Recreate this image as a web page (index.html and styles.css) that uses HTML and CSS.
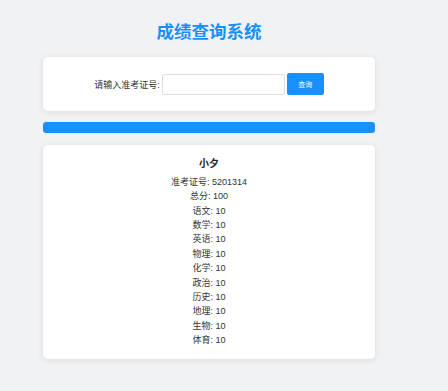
FILE: index.html
```html
<!DOCTYPE html>
<html lang="zh-CN">
<head>
    <meta charset="UTF-8">
    <meta name="viewport" content="width=device-width, initial-scale=1.0">
    <title>成绩查询系统</title>
    <link rel="stylesheet" href="styles.css">
</head>
<body>

<div class="container">
    <h1 class="title">成绩查询系统</h1>

    <div class="card search-card">
        <div class="search-row">
            <label for="ticket">请输入准考证号:</label>
            <input type="text" id="ticket">
            <button class="search-btn">查询</button>
        </div>
    </div>

    <div class="progress-bar"></div>

    <div class="card result-card">
        <h3 class="student-name">小夕</h3>
        <p>准考证号: 5201314</p>
        <p>总分: 100</p>
        <p>语文: 10</p>
        <p>数学: 10</p>
        <p>英语: 10</p>
        <p>物理: 10</p>
        <p>化学: 10</p>
        <p>政治: 10</p>
        <p>历史: 10</p>
        <p>地理: 10</p>
        <p>生物: 10</p>
        <p>体育: 10</p>
    </div>
</div>

</body>
</html>
```

FILE: styles.css
```css
/* Basic reset */
* {
    margin: 0;
    padding: 0;
    box-sizing: border-box;
}

body {
    font-family: "Liberation Sans", "Noto Sans CJK SC", sans-serif;
    background-color: #f0f2f5;
    color: #333;
    min-height: 100vh;
}

.container {
    width: 332px;
    margin-left: 43px;
    padding-top: 20px;
}

.title {
    text-align: center;
    color: #1890ff;
    font-size: 17.5px;
    line-height: 24px;
    margin-bottom: 13px;
}

/* Cards */
.card {
    background-color: white;
    border-radius: 5px;
    box-shadow: 0 1px 6px rgba(0, 0, 0, 0.1);
}

.search-card {
    padding: 16px;
}

.search-row {
    display: flex;
    justify-content: center;
    align-items: center;
    gap: 2px;
    font-size: 9px;
}

.search-row input {
    width: 123px;
    height: 21px;
    border: 1px solid #dcdfe6;
    border-radius: 2px;
    outline: none;
}

.search-btn {
    width: 37px;
    height: 22px;
    border: none;
    border-radius: 2px;
    background-color: #1890ff;
    color: white;
    font-size: 7px;
    font-family: inherit;
    cursor: pointer;
}

/* Progress bar */
.progress-bar {
    height: 11px;
    margin: 11px 0 12px;
    background-color: #1890ff;
    border-radius: 3px;
}

/* Result */
.result-card {
    padding: 12px 0;
    text-align: center;
}

.student-name {
    font-size: 10px;
    line-height: 14px;
    margin-bottom: 4px;
    color: #222;
}

.result-card p {
    font-size: 9px;
    line-height: 14.36px;
}
```
